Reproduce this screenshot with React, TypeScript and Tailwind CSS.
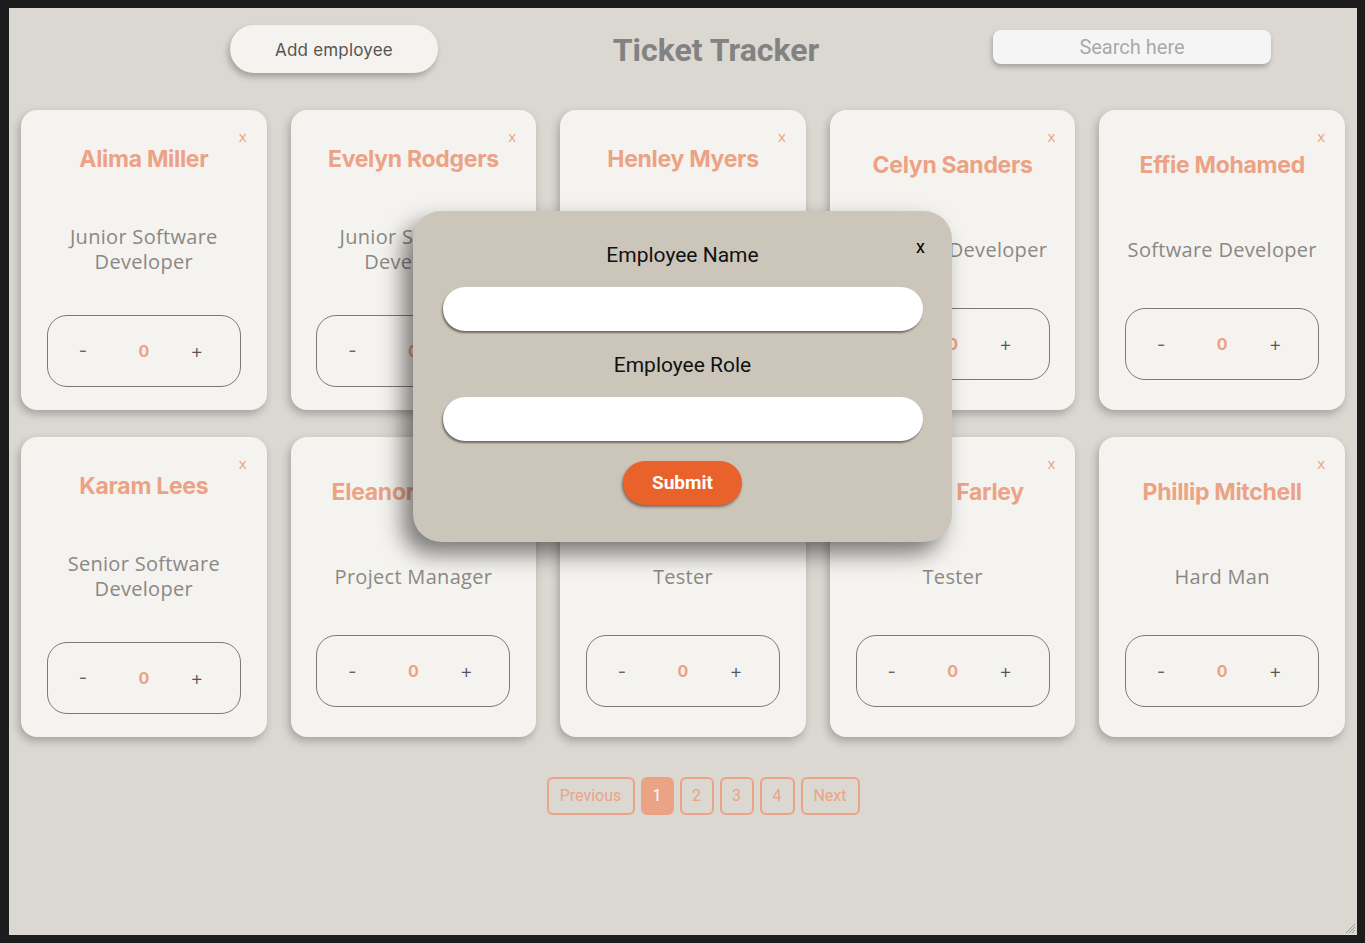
import React from "react";

type Emp = { name: string; role: string };

const employees: Emp[] = [
  { name: "Alima Miller", role: "Junior Software Developer" },
  { name: "Evelyn Rodgers", role: "Junior Software Developer" },
  { name: "Henley Myers", role: "Junior Software Developer" },
  { name: "Celyn Sanders", role: "Software Developer" },
  { name: "Effie Mohamed", role: "Software Developer" },
  { name: "Karam Lees", role: "Senior Software Developer" },
  { name: "Eleanor Hunter", role: "Project Manager" },
  { name: "Maria Lopez", role: "Tester" },
  { name: "Marco Farley", role: "Tester" },
  { name: "Phillip Mitchell", role: "Hard Man" },
];

function Card({ e }: { e: Emp }) {
  return (
    <div className="relative flex h-[300px] flex-col items-center justify-evenly rounded-[16px] bg-[#f5f3ef] shadow-[-2px_4px_8px_rgba(0,0,0,0.25)]">
      <span className="absolute right-[20px] top-[16px] text-[15px] leading-[20px] text-[#eca284] font-['Open_Sans',sans-serif]">
        x
      </span>
      <div className="flex h-[50px] items-center whitespace-nowrap text-[23px] font-bold leading-[28px] text-[#eca284] font-['Inter',sans-serif] tracking-[-0.3px]">
        {e.name}
      </div>
      <div className="w-[200px] py-[17px] text-center text-[20px] leading-[25px] tracking-[0.3px] text-[#8a8886] font-['Open_Sans',sans-serif]">
        {e.role}
      </div>
      <div className="flex h-[72px] w-[194px] items-center rounded-[20px] border border-[#7a7a7a] pl-[23px] font-['Inter',sans-serif]">
        <span className="w-[24px] text-center text-[18px] text-[#666]">-</span>
        <span className="ml-[41px] w-[16px] text-center text-[16px] font-bold text-[#eca284]">0</span>
        <span className="ml-[33px] w-[24px] text-center text-[20px] font-light text-[#555]">+</span>
      </div>
    </div>
  );
}

export default function App() {
  return (
    <div className="h-[943px] w-full bg-[#1c1c1e] pb-[8px] pl-[9px] pr-[8px] pt-[8px]">
      <div className="relative h-[927px] bg-[#dbd8d2]">
        {/* header */}
        <div className="flex h-[102px] items-start pl-[221px] pt-[17px]">
          <button className="h-[48px] w-[208px] rounded-[24px] bg-[#f5f3ef] pt-[3px] text-[17px] tracking-[0.2px] text-[#555] shadow-[-2px_4px_6px_rgba(0,0,0,0.25)] font-['Inter',sans-serif]">
            Add employee
          </button>
          <div className="ml-[174px] w-[208px] pt-[5px] text-center text-[32px] font-bold leading-[40px] text-[#828282] font-['Roboto',sans-serif] whitespace-nowrap">
            Ticket Tracker
          </div>
          <div className="ml-[173px] mt-[5px] flex h-[34px] w-[278px] items-center justify-center rounded-[8px] bg-[#f5f5f5] shadow-[-1px_3px_5px_rgba(0,0,0,0.25)]">
            <span className="text-[20px] text-[#a9a9a9] font-['Roboto',sans-serif]">Search here</span>
          </div>
        </div>

        {/* cards */}
        <div className="grid grid-cols-5 gap-x-[24px] gap-y-[27px] px-[12px]">
          {employees.map((e, i) => (
            <Card key={i} e={e} />
          ))}
        </div>

        {/* pagination */}
        <div className="mt-[40px] flex justify-center gap-[6px] pl-[40px] font-['Roboto',sans-serif] text-[16px]">
          <span className="flex h-[38px] w-[88px] items-center justify-center rounded-[6px] border-2 border-[#eba386] text-[#eba386]">
            Previous
          </span>
          <span className="flex h-[38px] w-[33px] items-center justify-center rounded-[6px] border-2 border-[#eba386] bg-[#eba386] text-white">
            1
          </span>
          <span className="flex h-[38px] w-[34px] items-center justify-center rounded-[6px] border-2 border-[#eba386] text-[#eba386]">
            2
          </span>
          <span className="flex h-[38px] w-[34px] items-center justify-center rounded-[6px] border-2 border-[#eba386] text-[#eba386]">
            3
          </span>
          <span className="flex h-[38px] w-[35px] items-center justify-center rounded-[6px] border-2 border-[#eba386] text-[#eba386]">
            4
          </span>
          <span className="flex h-[38px] w-[59px] items-center justify-center rounded-[6px] border-2 border-[#eba386] text-[#eba386]">
            Next
          </span>
        </div>

        {/* modal */}
        <div className="absolute left-[404px] top-[203px] flex h-[331px] w-[539px] flex-col items-center rounded-[28px] bg-[#ccc5b9] pt-[32px] shadow-[-10px_12px_22px_rgba(0,0,0,0.5)] font-['Roboto',sans-serif]">
          <span className="absolute right-[27px] top-[24px] text-[18px] leading-[24px] text-black">x</span>
          <div className="h-[24px] text-[21px] leading-[24px] text-[#111]">Employee Name</div>
          <div className="mt-[20px] h-[44px] w-[480px] rounded-full bg-white shadow-[-1px_2px_2px_rgba(0,0,0,0.45)]" />
          <div className="mt-[22px] h-[24px] text-[21px] leading-[24px] text-[#111]">Employee Role</div>
          <div className="mt-[20px] h-[44px] w-[480px] rounded-full bg-white shadow-[-1px_2px_2px_rgba(0,0,0,0.45)]" />
          <button className="mt-[20px] h-[44px] w-[119px] rounded-full bg-[#e9612b] text-[19px] font-bold text-white shadow-[-1px_2px_3px_rgba(0,0,0,0.45)]">
            Submit
          </button>
        </div>

        {/* resize grip */}
        <svg className="absolute bottom-[1px] right-[1px]" width="12" height="12" viewBox="0 0 12 12">
          <line x1="11" y1="2" x2="2" y2="11" stroke="#9a9a9a" strokeWidth="1" />
          <line x1="11" y1="5" x2="5" y2="11" stroke="#9a9a9a" strokeWidth="1" />
          <line x1="11" y1="8" x2="8" y2="11" stroke="#9a9a9a" strokeWidth="1" />
        </svg>
      </div>
    </div>
  );
}
